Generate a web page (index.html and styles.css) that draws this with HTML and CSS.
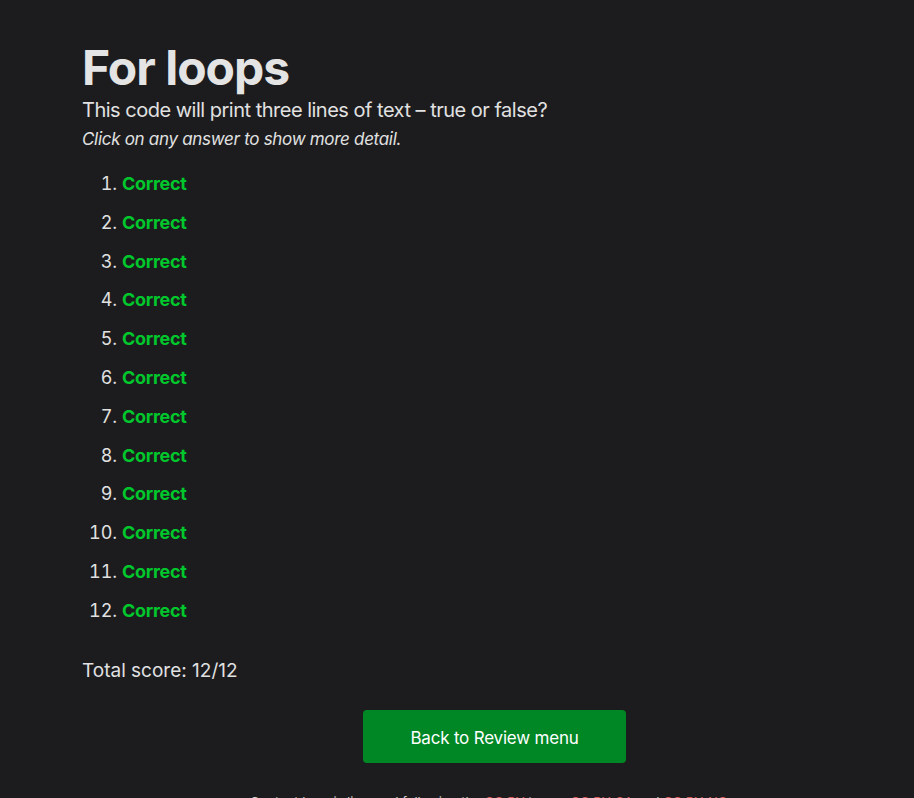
FILE: index.html
```html
<!DOCTYPE html>
<html lang="en">
<head>
<meta charset="utf-8">
<title>For loops</title>
<link rel="stylesheet" href="styles.css">
</head>
<body>
<main class="page">
  <h1 class="title">For loops</h1>
  <p class="question">This code will print three lines of text – true or false?</p>
  <p class="hint">Click on any answer to show more detail.</p>
  <ol class="answers">
    <li><span class="correct">Correct</span></li>
    <li><span class="correct">Correct</span></li>
    <li><span class="correct">Correct</span></li>
    <li><span class="correct">Correct</span></li>
    <li><span class="correct">Correct</span></li>
    <li><span class="correct">Correct</span></li>
    <li><span class="correct">Correct</span></li>
    <li><span class="correct">Correct</span></li>
    <li><span class="correct">Correct</span></li>
    <li><span class="correct">Correct</span></li>
    <li><span class="correct">Correct</span></li>
    <li><span class="correct">Correct</span></li>
  </ol>
  <p class="score">Total score: 12/12</p>
  <div class="actions">
    <a class="button" href="#">Back to Review menu</a>
  </div>
  <footer class="footer">
    Content here is licensed following the <a href="#">CC BY</a> terms, <a href="#">CC BY-SA</a> and <a href="#">CC BY-NC</a>
  </footer>
</main>
</body>
</html>
```
FILE: styles.css
```css
html, body {
  margin: 0;
  padding: 0;
  background: #1c1c1e;
}
body {
  font-family: Inter, "Noto Sans", "Liberation Sans", sans-serif;
  color: #e1e1e1;
}
.page {
  padding: 39px 0 0 82px;
  width: 832px;
  box-sizing: border-box;
}
.title {
  margin: 0;
  font-size: 48px;
  font-weight: 700;
  line-height: 58px;
  letter-spacing: -1px;
  color: #e4e4e4;
}
.question {
  margin: 1px 0 0;
  font-size: 20px;
  line-height: 24px;
  letter-spacing: -0.5px;
}
.hint {
  margin: 6px 0 0;
  font-size: 17px;
  font-style: italic;
  line-height: 22px;
  letter-spacing: -0.3px;
}
.answers {
  margin: 15px 0 0;
  padding-left: 40px;
  font-size: 18px;
  line-height: 38.8px;
}
.correct {
  color: #00c72c;
  font-weight: 700;
  letter-spacing: -0.3px;
}
.score {
  margin: 29px 0 0;
  font-size: 19px;
  line-height: 22px;
}
.actions {
  margin-top: 28px;
  padding-left: 281px;
  display: flex;
}
.button {
  display: flex;
  align-items: center;
  justify-content: center;
  box-sizing: border-box;
  width: 263px;
  height: 53px;
  padding-top: 3px;
  background: #008725;
  color: #ffffff;
  border-radius: 4px;
  text-decoration: none;
  font-size: 17px;
  letter-spacing: -0.2px;
}
.footer {
  margin-top: 29px;
  padding-left: 168px;
  font-size: 13px;
  line-height: 20px;
  color: #cfcfcf;
}
.footer a {
  color: #d85a5a;
  text-decoration: none;
}
```
